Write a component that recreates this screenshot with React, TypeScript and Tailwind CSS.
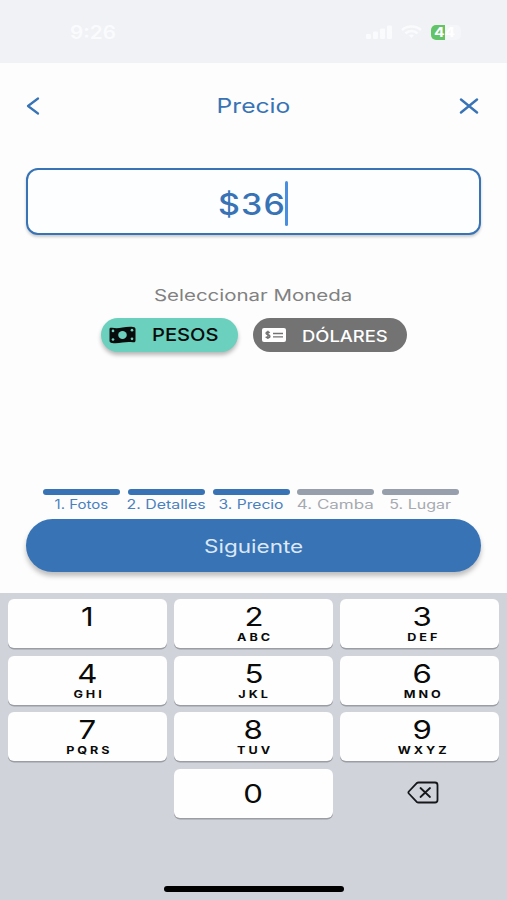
import React from "react";

const keys = [
  { n: "1", l: "" },
  { n: "2", l: "ABC" },
  { n: "3", l: "DEF" },
  { n: "4", l: "GHI" },
  { n: "5", l: "JKL" },
  { n: "6", l: "MNO" },
  { n: "7", l: "PQRS" },
  { n: "8", l: "TUV" },
  { n: "9", l: "WXYZ" },
];

const steps = [
  { label: "1. Fotos", done: true, fit: "scale-x-[1.2]" },
  { label: "2. Detalles", done: true, fit: "scale-x-[1.27]" },
  { label: "3. Precio", done: true, fit: "scale-x-[1.25]" },
  { label: "4. Camba", done: false, fit: "scale-x-[1.36]" },
  { label: "5. Lugar", done: false, fit: "scale-x-[1.28]" },
];

function StatusBar() {
  return (
    <header className="flex h-[63px] items-start justify-between bg-[#f1f2f6] pt-[21px] pr-[46px] pl-[70px] text-[#fafbfd]">
      <span className="origin-left scale-x-[1.15] pt-px text-[18px] leading-[22px] font-semibold">9:26</span>
      <div className="flex h-[22px] items-center">
        <svg width="26" height="14" viewBox="0 0 26 14" fill="currentColor">
          <rect x="0" y="9" width="5" height="5" rx="1.2" />
          <rect x="7" y="6.5" width="5" height="7.500" rx="1.2" />
          <rect x="14" y="3.500" width="5" height="10.500" rx="1.2" />
          <rect x="21" y="0.500" width="5" height="13.500" rx="1.2" />
        </svg>
        <svg className="ml-[9px]" width="21" height="14" viewBox="0 0 21 14" fill="none" stroke="currentColor" strokeWidth="2.500">
          <path d="M1 5C6 .3 15 .3 20 5" />
          <path d="M4.500 8.300c3.300-3 8.700-3 12 0" />
          <path d="M8 10.500c1.500-1.200 3.500-1.200 5 0L10.500 13z" fill="currentColor" stroke="none" />
        </svg>
        <div className="relative ml-[9px] flex h-[15px] w-[30px] items-center overflow-hidden rounded-[5px] bg-[#f5f6f9]">
          <span className="h-full w-[14px] bg-[#62c466]" />
          <span className="absolute top-0 left-[3px] origin-left scale-x-[1.2] text-[13px] leading-[15px] font-bold text-white">44</span>
        </div>
      </div>
    </header>
  );
}

function WavyBill() {
  return (
    <svg width="27" height="18" viewBox="0 0 27 18">
      <path d="M.5 3.300C.5 1.800 1.500 1.500 3 1.800c3.500.7 7 .5 10.500-.2S20.500.4 24 .9c1.500.2 2.500.7 2.500 2.200v11.400c0 1.500-1 2-2.500 1.800-3.500-.6-7-.4-10.500.2s-7 1.100-10.500.5c-1.500-.2-2.500-.7-2.500-2.200z" fill="#080b0b" />
      <ellipse cx="13.500" cy="9" rx="4.300" ry="4" fill="#6bd0bd" />
      <g fill="#6bd0bd">
        <circle cx="4" cy="4.900" r="1.350" />
        <circle cx="4" cy="13.500" r="1.350" />
        <circle cx="23" cy="4.200" r="1.350" />
        <circle cx="23" cy="12.800" r="1.350" />
      </g>
    </svg>
  );
}

function MoneyCheck() {
  return (
    <svg width="24" height="14" viewBox="0 0 24 14">
      <rect width="24" height="14" rx="2" fill="#fff" />
      <path d="M11 5.500h10M11 8.900h10" stroke="#737373" strokeWidth="1.300" />
      <path d="M7.700 4.900C7.200 4.300 6.600 4 5.800 4 4.700 4 4 4.500 4 5.300c0 2 3.900 1 3.900 3 0 .9-.8 1.500-2 1.500-.9 0-1.700-.4-2.200-1M5.900 2.700V11" fill="none" stroke="#737373" strokeWidth="1.400" />
    </svg>
  );
}

export default function App() {
  return (
    <div className="flex h-[900px] w-[507px] flex-col overflow-hidden bg-[#fdfdfe] font-['Inter','Liberation_Sans',sans-serif]">
      <StatusBar />

      <main className="flex h-[530px] flex-col text-[#3773b5]">
        <nav className="flex h-[85px] items-center justify-between pr-[28px] pl-[26px]">
          <svg width="14" height="18" viewBox="0 0 14 18" fill="none" stroke="currentColor" strokeWidth="2.200" strokeLinecap="round" strokeLinejoin="round">
            <path d="M12 1.500 2 9l10 7.500" />
          </svg>
          <h1 className="translate-x-[3.500px] scale-x-[1.23] text-[20px] leading-6">Precio</h1>
          <svg width="20" height="16" viewBox="0 0 20 16" fill="none" stroke="currentColor" strokeWidth="2.400" strokeLinecap="round">
            <path d="m2 1.500 16 13M18 1.500l-16 13" />
          </svg>
        </nav>

        <div className="mx-[26px] mt-[20px] flex h-[67px] items-center justify-center rounded-[12px] border-[2.5px] border-[#3773b5] bg-[#fdfeff] pt-[3px] shadow-[0_2px_3px_rgba(0,0,0,0.2)]">
          <span className="flex w-[66px] justify-center">
            <span className="scale-x-[1.13] pt-[2px] text-[30px] leading-10 font-medium tracking-[1px]">$36</span>
          </span>
          <span className="h-[45px] w-[3px] rounded-full bg-[#4a8ee0]" />
        </div>

        <div className="mt-[51px] flex h-[20px] justify-center">
          <span className="scale-x-[1.32] text-[15.500px] leading-[20px] whitespace-nowrap text-[#818181]">Seleccionar Moneda</span>
        </div>

        <div className="mt-[12px] flex justify-center gap-[15px]">
          <button className="flex h-[34px] w-[137px] items-center rounded-full bg-[#6bd0bd] pl-[8px] text-[#080b0b] shadow-[0_3px_4px_rgba(0,0,0,0.28)]">
            <WavyBill />
            <span className="ml-[16px] origin-left scale-x-[1.15] pt-px text-[17.500px] font-medium">PESOS</span>
          </button>
          <button className="flex h-[34px] w-[154px] items-center rounded-full bg-[#737373] pl-[9px] text-white">
            <MoneyCheck />
            <span className="ml-[16px] origin-left scale-x-[1.15] pt-px text-[16px] font-medium">DÓLARES</span>
          </button>
        </div>

        <div className="mt-[137px] ml-[43px] flex gap-[7.750px]">
          {steps.map((s) => (
            <div key={s.label} className={s.done ? "flex w-[77px] flex-col items-center text-[#4a81bd]" : "flex w-[77px] flex-col items-center text-[#a6aab0]"}>
              <span className={s.done ? "h-[6px] w-full rounded-full bg-[#3773b5]" : "h-[6px] w-full rounded-full bg-[#969fab]"} />
              <span className={`${s.fit} pt-px text-[12.500px] leading-[18px] whitespace-nowrap`}>{s.label}</span>
            </div>
          ))}
        </div>

        <button className="mx-[26px] mt-[5px] flex h-[53px] shrink-0 items-center justify-center rounded-full bg-[#3773b5] text-[#dce8f5] shadow-[0_4px_5px_rgba(0,0,0,0.25)]">
          <span className="scale-x-[1.25] pt-px text-[18px]">Siguiente</span>
        </button>
      </main>

      <section className="flex flex-1 flex-col bg-[#d0d3da] px-[8px] pt-[6px] text-[#0a0a0a]">
        <div className="grid auto-rows-[49px] grid-cols-3 gap-x-[7px] gap-y-[7.700px]">
          {keys.map((k) => (
            <button key={k.n} className="flex flex-col items-center rounded-[6px] bg-[#fefefe] pt-[4px] shadow-[0_1.500px_0_#9a9da3] nth-[3n]:pl-[6px]">
              <span className="scale-x-[1.2] text-[26px] leading-[28px]">{k.n}</span>
              <span className="-mr-[3px] scale-x-[1.2] pt-px text-[10.500px] leading-[12px] font-bold tracking-[2.500px]">{k.l}</span>
            </button>
          ))}
          <span />
          <button className="flex items-center justify-center rounded-[6px] bg-[#fefefe] shadow-[0_1.500px_0_#9a9da3]">
            <span className="scale-x-[1.2] text-[26px] leading-[28px]">0</span>
          </button>
          <button className="flex items-center justify-center pb-[2px] pl-[6px]">
            <svg width="32" height="23" viewBox="0 0 32 23" fill="none" stroke="#15171b" strokeWidth="1.800" strokeLinecap="round" strokeLinejoin="round">
              <path d="M11.500 1.500H28q2.500 0 2.500 2.500v15q0 2.500-2.500 2.500H11.500q-1 0-2-.8L1.800 12.500q-.8-1 0-2l7.700-8.200q1-.8 2-.8z" />
              <path d="m13.500 7 9.500 9M23 7l-9.500 9" />
            </svg>
          </button>
        </div>
        <div className="mt-auto mb-[8px] ml-[156px] h-[6px] w-[180px] rounded-full bg-black" />
      </section>
    </div>
  );
}
